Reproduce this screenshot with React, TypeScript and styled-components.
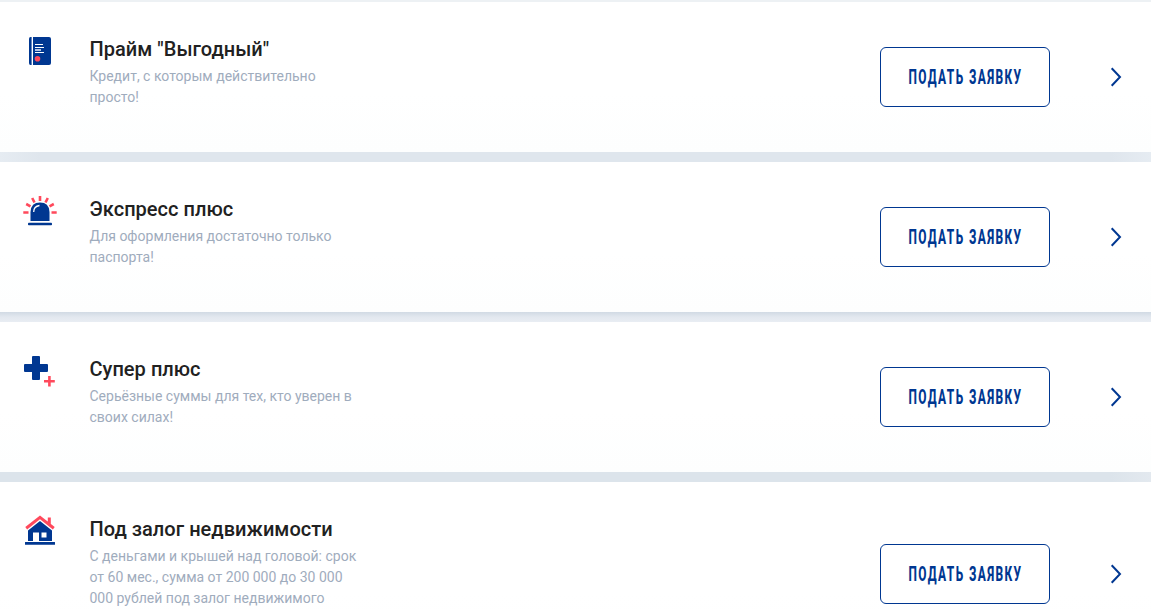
import type { ReactNode } from 'react'
import styled, { createGlobalStyle } from 'styled-components'

const GlobalStyle = createGlobalStyle`
  * {
    box-sizing: border-box;
  }

  body {
    margin: 0;
    overflow: hidden;
    background: #fff;
    font-family: Roboto, "Liberation Sans", sans-serif;
  }
`

const BookIcon = () => (
  <svg width="34" height="34" viewBox="0 0 34 34">
    <path d="M7.5 3H8.6V31H7.5Q6 31 6 29V5Q6 3 7.5 3Z" fill="#003791" />
    <path d="M10 3H26Q28 3 28 5V29Q28 31 26 31H10Z" fill="#003791" />
    <path d="M12 10.5H20M12 13.5H21M12 18.5H21" stroke="#fff" strokeWidth="1.1" />
    <path d="M12 16H18" stroke="#c8d4ec" strokeWidth="1.8" />
    <circle cx="14.5" cy="24.7" r="2.8" fill="#ff495c" />
  </svg>
)

const SirenIcon = () => (
  <svg width="34" height="34" viewBox="0 0 34 34">
    <path d="M17 2V7M9.2 4L11.5 8.5M24.8 4L22.5 8.5M3.2 10L7.5 12.3M30.8 10L26.5 12.3M.3 18.5H5.5M28.5 18.5H33.7" stroke="#ff495c" strokeWidth="2.6" fill="none" />
    <path d="M7.5 27V18Q8 8.6 17 8.6Q26 8.6 26.5 18V27Z" fill="#003791" />
    <path d="M10.7 18Q10.7 12.3 16.5 11.5" stroke="#fff" strokeWidth="1.3" fill="none" />
    <rect x="5" y="28.8" width="24" height="2.4" rx=".8" fill="#003791" />
  </svg>
)

const PlusIcon = () => (
  <svg width="34" height="34" viewBox="0 0 34 34">
    <path d="M10 2H16Q17 2 17 3V10H24Q25 10 25 11V17Q25 18 24 18H17V25Q17 26 16 26H10Q9 26 9 25V18H2Q1 18 1 17V11Q1 10 2 10H9V3Q9 2 10 2Z" fill="#003791" />
    <path d="M26.4 22V32.6M21 27.3H31.8" stroke="#ff495c" strokeWidth="2.6" />
  </svg>
)

const HouseIcon = () => (
  <svg width="34" height="34" viewBox="0 0 34 34">
    <path d="M3.2 14.2L17 3.4L30.8 14.2M26.3 10V3.5" stroke="#ff495c" strokeWidth="3" fill="none" />
    <path d="M5 16.5L17 7L29 16.5V27H16V18.5H10V27H5Z" fill="#003791" />
    <rect x="18.5" y="18.5" width="5" height="5" fill="#fff" />
    <rect x="2" y="28" width="30" height="2.8" rx=".3" fill="#003791" />
  </svg>
)

interface Loan {
  icon: ReactNode
  title: string
  text: string
  height?: number
  gap: string
}

const loans: Loan[] = [
  {
    icon: <BookIcon />,
    title: 'Прайм "Выгодный"',
    text: 'Кредит, с которым действительно просто!',
    gap: 'linear-gradient(90deg, #e6ecf2, #dfe6ed 40px, #dfe6ed calc(100% - 40px), #e6ecf2)',
  },
  {
    icon: <SirenIcon />,
    title: 'Экспресс плюс',
    text: 'Для оформления достаточно только паспорта!',
    gap: 'linear-gradient(180deg, #d1dae4, #e2e8ef 50%, #e9edf3)',
  },
  {
    icon: <PlusIcon />,
    title: 'Супер плюс',
    text: 'Серьёзные суммы для тех, кто уверен в своих силах!',
    gap: 'linear-gradient(90deg, #dce4eb calc(100% - 40px), #e3e9ef)',
  },
  {
    icon: <HouseIcon />,
    title: 'Под залог недвижимости',
    text: 'С деньгами и крышей над головой: срок от 60 мес., сумма от 200 000 до 30 000 000 рублей под залог недвижимого',
    height: 184,
    gap: '#dfe6ed',
  },
]

const App = () => {
  return (
    <>
      <GlobalStyle />
      <LoanList>
        {loans.map((loan) => (
          <LoanItem key={loan.title} $gap={loan.gap}>
            <LoanCard $height={loan.height}>
              <IconBox>{loan.icon}</IconBox>
              <Info>
                <h3 className="title">{loan.title}</h3>
                <p className="text">{loan.text}</p>
              </Info>
              <ApplyButton><span>Подать заявку</span></ApplyButton>
              <Arrow width="12" height="20" viewBox="0 0 12 20">
                <path d="M1.7 1.2L10 10L1.7 18.8" />
              </Arrow>
            </LoanCard>
          </LoanItem>
        ))}
      </LoanList>
    </>
  )
}

const LoanList = styled.main`
  height: 609px;
  overflow: hidden;
  border-top: 2px solid #edf1f4;
`

const LoanItem = styled.div<{ $gap: string }>`
  padding-bottom: 10px;
  background: ${({ $gap }) => $gap} bottom / 100% 10px no-repeat;
`

const LoanCard = styled.section<{ $height?: number }>`
  display: flex;
  align-items: center;
  height: ${({ $height }) => $height ?? 150}px;
  padding: 0 29px 0 23px;
  background: linear-gradient(#fff 60%, #fdfefe);
`

const IconBox = styled.div`
  display: flex;
  align-self: flex-start;
  width: 66.5px;
  padding-top: 32px;
`

const Info = styled.div`
  align-self: flex-start;
  width: 270px;
  padding-top: 35px;

  .title {
    margin: 0;
    color: #212121;
    font-size: 20px;
    font-weight: 500;
    letter-spacing: 0.03px;
    line-height: 24px;
    white-space: nowrap;
  }

  .text {
    margin: 5px 0 0;
    color: #9facbd;
    font-size: 14px;
    line-height: 21px;
  }
`

const ApplyButton = styled.button`
  display: flex;
  align-items: center;
  justify-content: center;
  width: 170px;
  height: 60px;
  margin-left: auto;
  padding: 1px 0 0;
  border: 1px solid #003791;
  border-radius: 6px;
  background: #fff;
  color: #003791;
  font: 800 19.5px Roboto, sans-serif;
  text-transform: uppercase;
  white-space: nowrap;

  /* condensed caps */
  span {
    letter-spacing: 2.3px;
    transform: scaleX(0.61);
  }
`

const Arrow = styled.svg`
  margin-left: 60px;
  fill: none;
  stroke: #003791;
  stroke-width: 2;
`

export default App
